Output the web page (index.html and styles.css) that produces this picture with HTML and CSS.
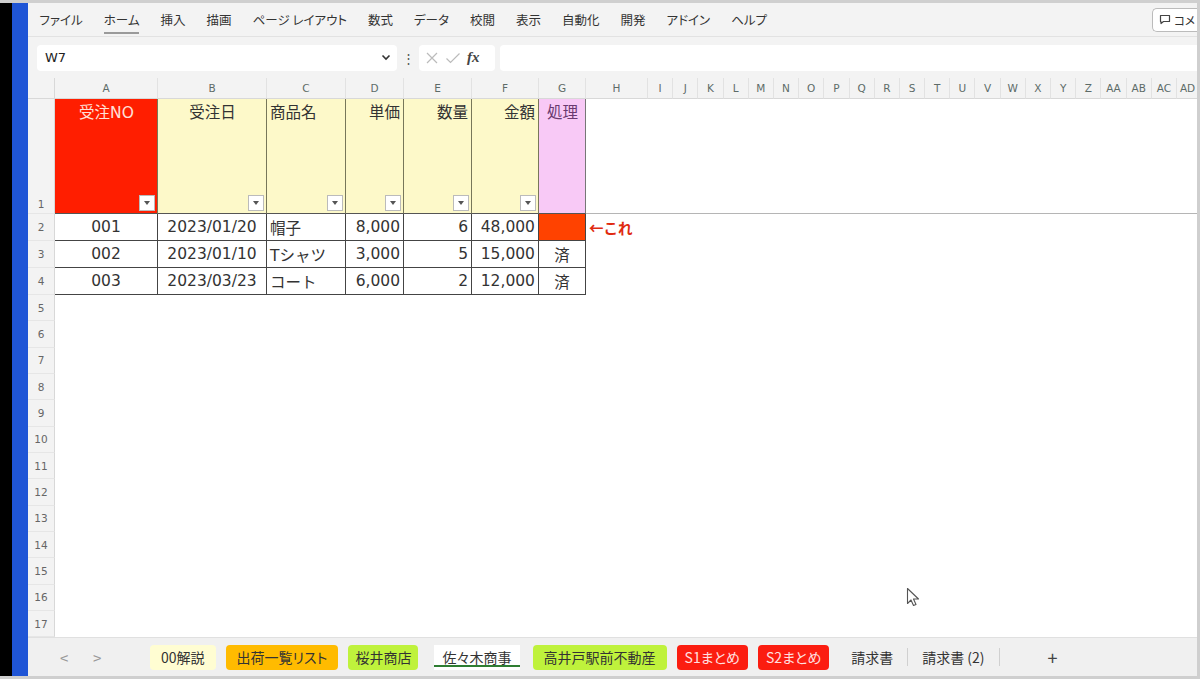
FILE: index.html
```html
<!DOCTYPE html>
<html lang="ja">
<head>
<meta charset="utf-8">
<title>Excel</title>
<link rel="stylesheet" href="styles.css">
</head>
<body>
<div class="screen">
  <div class="strip-black"></div>
  <div class="strip-blue"></div>
  <div class="app">
    <div class="menubar">
      <span class="mi">ファイル</span>
      <span class="mi active">ホーム</span>
      <span class="mi">挿入</span>
      <span class="mi">描画</span>
      <span class="mi">ページ レイアウト</span>
      <span class="mi">数式</span>
      <span class="mi">データ</span>
      <span class="mi">校閲</span>
      <span class="mi">表示</span>
      <span class="mi">自動化</span>
      <span class="mi">開発</span>
      <span class="mi">アドイン</span>
      <span class="mi">ヘルプ</span>
      <span class="spacer"></span>
      <span class="comment-btn"><svg class="bubble" width="12" height="11" viewBox="0 0 12 11"><path d="M1.5 1.5h9v6h-6l-2.5 2v-2h-0.5z" fill="none" stroke="#444" stroke-width="1.2" stroke-linejoin="round"/></svg><span>コメ</span></span>
    </div>
    <div class="fbar">
      <div class="namebox"><span>W7</span><svg width="10" height="7" viewBox="0 0 10 7"><path d="M1.5 1.5l3.5 3.5 3.5-3.5" fill="none" stroke="#333" stroke-width="1.6"/></svg></div>
      <span class="dots">⋮</span>
      <div class="fbtns">
        <svg width="14" height="14" viewBox="0 0 14 14"><path d="M2 2l10 10M12 2L2 12" stroke="#bbb" stroke-width="1.2"/></svg>
        <svg width="16" height="14" viewBox="0 0 16 14"><path d="M1.5 7.5l4 4 9-9" fill="none" stroke="#bbb" stroke-width="1.2"/></svg>
        <span class="fx">fx</span>
      </div>
      <div class="finput"></div>
    </div>
    <div class="sheet">
      <div class="ch corner"></div>
      <div class="ch">A</div><div class="ch">B</div><div class="ch">C</div><div class="ch">D</div><div class="ch">E</div><div class="ch">F</div><div class="ch">G</div><div class="ch">H</div>
      <div class="ch">I</div><div class="ch">J</div><div class="ch">K</div><div class="ch">L</div><div class="ch">M</div><div class="ch">N</div><div class="ch">O</div><div class="ch">P</div><div class="ch">Q</div><div class="ch">R</div><div class="ch">S</div><div class="ch">T</div><div class="ch">U</div><div class="ch">V</div><div class="ch">W</div><div class="ch">X</div><div class="ch">Y</div><div class="ch">Z</div><div class="ch">AA</div><div class="ch">AB</div><div class="ch">AC</div><div class="ch clip">AD</div>

      <div class="rh r1">1</div>
      <div class="hd red center"><span>受注NO</span><i class="flt"></i></div>
      <div class="hd yel center"><span>受注日</span><i class="flt"></i></div>
      <div class="hd yel left"><span>商品名</span><i class="flt"></i></div>
      <div class="hd yel right"><span>単価</span><i class="flt"></i></div>
      <div class="hd yel right"><span>数量</span><i class="flt"></i></div>
      <div class="hd yel right"><span>金額</span><i class="flt"></i></div>
      <div class="hd pink center"><span>処理</span></div>
      <div class="freeze"></div>

      <div class="rh">2</div>
      <div class="c center">001</div>
      <div class="c center">2023/01/20</div>
      <div class="c left">帽子</div>
      <div class="c right">8,000</div>
      <div class="c right">6</div>
      <div class="c right">48,000</div>
      <div class="c center orange"></div>
      <div class="note">←これ</div>

      <div class="rh">3</div>
      <div class="c center">002</div>
      <div class="c center">2023/01/10</div>
      <div class="c left">Tシャツ</div>
      <div class="c right">3,000</div>
      <div class="c right">5</div>
      <div class="c right">15,000</div>
      <div class="c center">済</div>

      <div class="rh">4</div>
      <div class="c center">003</div>
      <div class="c center">2023/03/23</div>
      <div class="c left">コート</div>
      <div class="c right">6,000</div>
      <div class="c right">2</div>
      <div class="c right">12,000</div>
      <div class="c center">済</div>

      <div class="rh rfirst">5</div>
      <div class="rh">6</div>
      <div class="rh">7</div>
      <div class="rh">8</div>
      <div class="rh">9</div>
      <div class="rh">10</div>
      <div class="rh">11</div>
      <div class="rh">12</div>
      <div class="rh">13</div>
      <div class="rh">14</div>
      <div class="rh">15</div>
      <div class="rh">16</div>
      <div class="rh">17</div>
    </div>
    <div class="tabbar">
      <span class="nav">&lt;</span>
      <span class="nav">&gt;</span>
      <span class="tab t-lyel">00解説</span>
      <span class="tab t-orange">出荷一覧リスト</span>
      <span class="tab t-green t-narrow">桜井商店</span>
      <span class="tab t-active">佐々木商事</span>
      <span class="tab t-green">高井戸駅前不動産</span>
      <span class="tab t-red">S1まとめ</span>
      <span class="tab t-red">S2まとめ</span>
      <span class="tab t-plain">請求書</span>
      <span class="sep"></span>
      <span class="tab t-plain">請求書 (2)</span>
      <span class="sep"></span>
      <span class="plus">+</span>
    </div>
  </div>
  <svg class="cursor" width="16" height="22" viewBox="0 0 16 22"><path d="M1.5 1.5v15l3.5-3.5 2.5 5.5 2.5-1-2.5-5.5h5z" fill="#fff" stroke="#555" stroke-width="1.1" stroke-linejoin="round"/></svg>
</div>
</body>
</html>
```

FILE: styles.css
```css
* { box-sizing: border-box; }
html, body { margin: 0; padding: 0; }
body {
  width: 1200px;
  height: 679px;
  overflow: hidden;
  background: #fff;
  font-family: "Noto Sans CJK JP", "Noto Sans", sans-serif;
  color: #222;
}
.screen {
  position: relative;
  display: flex;
  width: 1200px;
  height: 679px;
  border-top: 3px solid #cfcfcf;
  border-right: 3px solid #cfcfcf;
  border-bottom: 3px solid #cfcfcf;
  overflow: hidden;
}
.strip-black { width: 12px; background: #000; flex: none; }
.strip-blue { width: 16px; background: #1f55d6; flex: none; }
.app {
  flex: 1;
  display: flex;
  flex-direction: column;
  min-width: 0;
  background: #f3f3f3;
}

/* menu */
.menubar {
  height: 34px;
  display: flex;
  align-items: center;
  padding-left: 1px;
  font-size: 12.5px;
  font-feature-settings: "palt";
  color: #333;
  background: #f3f3f3;
  border-bottom: 1px solid #e2e2e2;
}
.mi { padding: 0 10.5px; line-height: 20px; position: relative; white-space: nowrap; }
.mi.active::after {
  content: "";
  position: absolute;
  left: 11px; right: 11px; bottom: -4px;
  height: 2px;
  background: #9a9a9a;
}
.spacer { flex: 1; }
.comment-btn {
  flex: none;
  display: flex;
  align-items: center;
  gap: 3px;
  height: 24px;
  padding: 0 2px 0 6px;
  border: 1px solid #bbb;
  border-right: none;
  border-radius: 5px 0 0 5px;
  background: #fff;
  font-size: 11.5px;
  white-space: nowrap;
}
.bubble { flex: none; }

/* formula bar */
.fbar {
  height: 41px;
  display: flex;
  align-items: center;
  padding: 0 0 0 9px;
  background: #f3f3f3;
}
.namebox {
  width: 360px;
  height: 26px;
  background: #fff;
  border-radius: 4px;
  display: flex;
  align-items: center;
  justify-content: space-between;
  padding: 0 6px 0 8px;
  font-family: "DejaVu Sans", sans-serif;
  font-size: 13px;
  color: #222;
}
.dots { width: 22px; text-align: center; color: #555; font-size: 13px; }
.fbtns {
  width: 76px;
  height: 26px;
  background: #fff;
  border-radius: 4px;
  display: flex;
  align-items: center;
  gap: 6px;
  padding: 0 6px;
}
.fx { font-family: "Liberation Serif", serif; font-style: italic; font-weight: bold; font-size: 15px; color: #444; }
.finput { flex: 1; height: 26px; background: #fff; margin-left: 5px; border-radius: 4px 0 0 4px; }

/* sheet */
.sheet {
  display: grid;
  grid-template-columns: 27px 103px 109px 79px 58px 68px 67px 47px 62px repeat(22, 25.2px);
  grid-template-rows: 21px 115px 27px 27px 27px repeat(13, 26.35px);
  background: #fff;
  flex: none;
  overflow: hidden;
}
.ch {
  background: #f3f3f3;
  color: #5d6b68;
  font-family: "DejaVu Sans", sans-serif;
  font-size: 10.5px;
  display: flex;
  align-items: center;
  justify-content: center;
  border-right: 1px solid #e2e2e2;
  border-bottom: 1px solid #d8d8d8;
  white-space: nowrap;
  overflow: hidden;
}
.ch.corner { border-right: 1px solid #d8d8d8; }
.ch.clip { justify-content: flex-start; padding-left: 3px; }
.rh {
  grid-column: 1;
  background: #f3f3f3;
  color: #666;
  font-family: "DejaVu Sans", sans-serif;
  font-size: 10.5px;
  display: flex;
  align-items: center;
  justify-content: center;
  border-right: 1px solid #d8d8d8;
  border-bottom: 1px solid #e6e6e6;
}
.rh.r1 { align-items: flex-end; padding-bottom: 3px; }

.hd {
  display: flex;
  flex-direction: column;
  justify-content: space-between;
  font-family: "DejaVu Sans", "Noto Sans CJK JP", sans-serif;
  font-size: 15.5px;
  padding: 4px 2px 2px 3px;
  border-right: 1px solid #77775a;
  border-bottom: 1px solid #555;
}
.hd span { line-height: 21px; }
.hd.center span { align-self: center; }
.hd.left span { align-self: flex-start; }
.hd.right span { align-self: flex-end; padding-right: 1px; }
.hd.red { background: #ff1e00; color: #ffe0d8; }
.hd.yel { background: #fdf9c9; color: #333; }
.hd.pink { background: #f8c9f6; color: #6a3a70; border-right: 1px solid #777; }
.flt {
  align-self: flex-end;
  width: 16px;
  height: 16px;
  background: #fff;
  border: 1px solid #bbb;
  display: flex;
  align-items: center;
  justify-content: center;
}
.flt::after {
  content: "";
  border-left: 3.5px solid transparent;
  border-right: 3.5px solid transparent;
  border-top: 4px solid #555;
}
.freeze {
  grid-column: 9 / -1;
  grid-row: 2;
  border-bottom: 1px solid #b5b5b5;
}

.c {
  font-family: "DejaVu Sans", "Noto Sans CJK JP", sans-serif;
  font-size: 15.5px;
  color: #333;
  display: flex;
  align-items: center;
  padding: 0 3px;
  border-right: 1px solid #444;
  border-bottom: 1px solid #444;
  white-space: nowrap;
  overflow: hidden;
}
.c.center { justify-content: center; }
.c.left { justify-content: flex-start; }
.c.right { justify-content: flex-end; }
.c.orange { background: #ff4200; }
.note {
  grid-column: 9 / span 3;
  display: flex;
  align-items: center;
  padding-left: 3px;
  color: #e02a10;
  font-weight: bold;
  font-size: 14.5px;
}
.rfirst { grid-row: 6; }

/* tabs */
.tabbar {
  flex: 1;
  display: flex;
  align-items: center;
  background: #f0f0f0;
  border-top: 1px solid #e0e0e0;
  padding-left: 32px;
  font-size: 14px;
  font-feature-settings: "palt";
  color: #333;
}
.nav { width: 33px; color: #999; font-size: 15px; text-align: left; }
.nav + .nav { width: 57px; }
.tab {
  height: 25px;
  display: flex;
  align-items: center;
  padding: 0 11px;
  border-radius: 4px;
  margin-right: 10px;
  white-space: nowrap;
}
.t-lyel { background: #fffdd2; }
.t-orange { background: #ffbb00; }
.t-green { background: #bff23c; }
.t-narrow { padding: 0 7px; }
.t-red { background: #fb1d10; color: #ffe0e0; padding: 0 8px; }
.t-plain { background: transparent; padding: 0 12px; margin-right: 0; }
.t-active {
  background: #fff;
  box-shadow: inset 0 -3px 0 #fff, inset 0 -5px 0 #2e7d32;
  padding: 0 8px;
  margin-left: 6px;
  margin-right: 13px;
  border-radius: 0;
}
.sep { width: 1px; height: 18px; background: #d0d0d0; margin: 0 2px; }
.plus { margin-left: 46px; font-size: 18px; color: #444; }

.cursor { position: absolute; left: 906px; top: 584px; }
```
